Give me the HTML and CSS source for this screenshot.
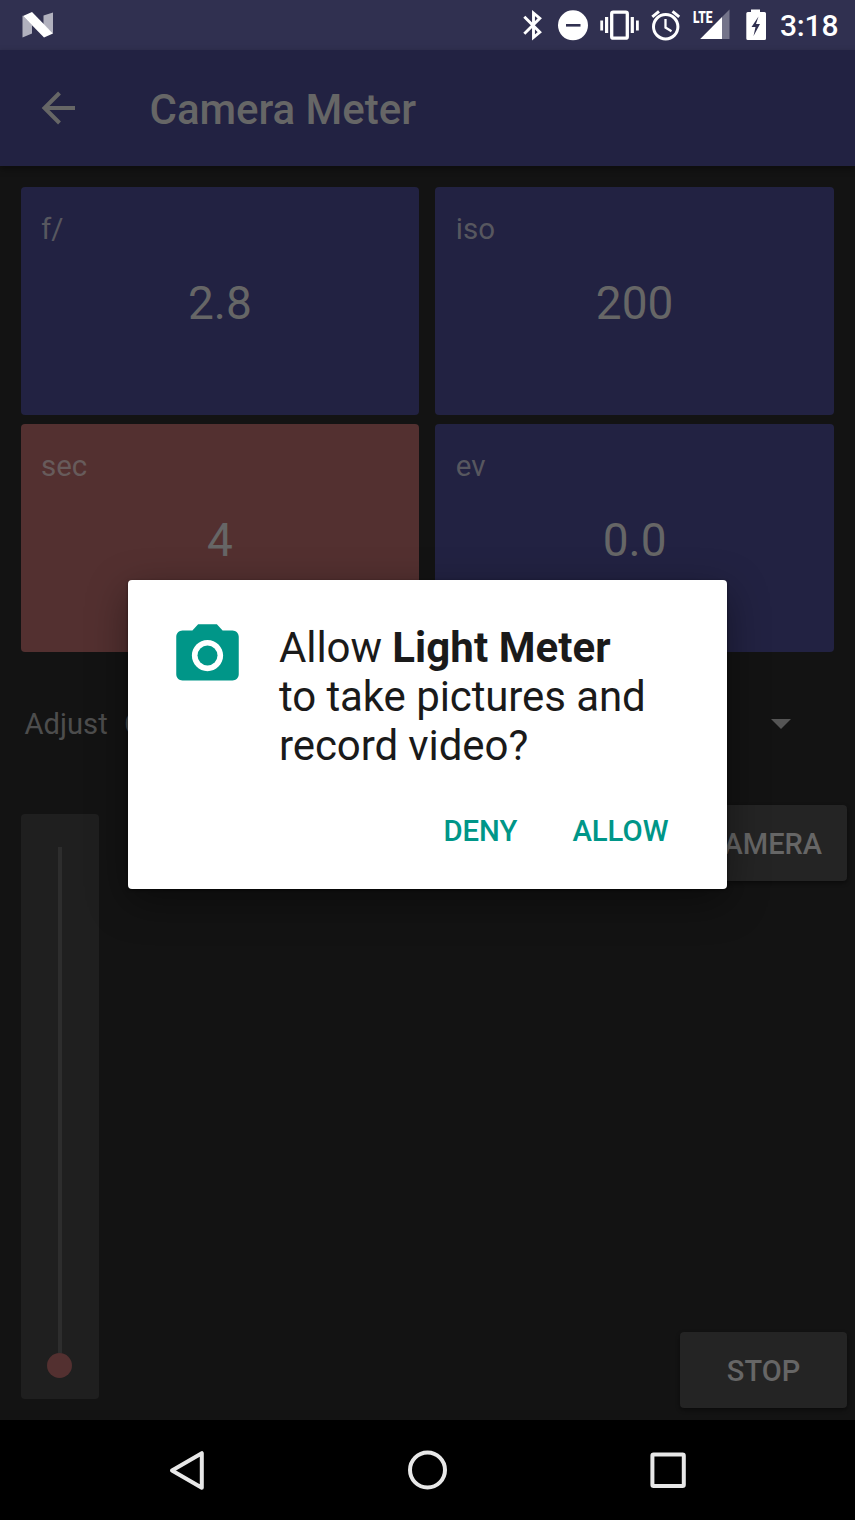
FILE: index.html
```html
<!DOCTYPE html>
<html lang="en">
<head>
<meta charset="utf-8">
<title>Camera Meter</title>
<link rel="stylesheet" href="styles.css">
</head>
<body>
<div class="screen">
  <header class="status">
    <svg class="n-logo" width="56" height="50" viewBox="0 0 56 50">
      <path fill="#b1b1be" d="M22.500 15.500L32 25v8.500l-9.500 4zM43.500 15.500L53 12.500v21l-9.500-9z"/>
      <path fill="#fff" d="M23 16l9-4 21 21.500-9 4z"/>
    </svg>
    <div class="status-icons">
      <svg width="34" height="50" viewBox="516 0 34 50" fill="none" stroke="#fff" stroke-width="2.900">
        <path d="M524.300 16.700l15.500 15.500-6.300 5.300V13l6.300 5.300-15.500 15.500"/>
      </svg>
      <svg width="45" height="50" viewBox="550 0 45 50">
        <circle cx="573" cy="25.300" r="15" fill="#fff"/><path fill="#303050" d="M566 24h14.500v2.600H566z"/>
      </svg>
      <svg width="48" height="50" viewBox="595 0 48 50">
        <path fill="#fff" d="M600.300 20.500h2.800v10h-2.800zM605 17h3.200v16H605zM630.700 17h3.200v16h-3.200zM636 20.500h2.800v10H636z"/>
        <rect x="611.700" y="12.200" width="15.600" height="26" rx="1.500" fill="none" stroke="#fff" stroke-width="3.300"/>
      </svg>
      <svg width="45" height="50" viewBox="643 0 45 50" fill="none" stroke="#fff" stroke-width="3">
        <circle cx="665.700" cy="26.700" r="12.200"/><path d="M665.500 19v8.500l6 3.700" stroke-width="2.300"/><path d="M652.300 16.800l6.700-5.500M672.500 11.300l6.700 5.500"/>
      </svg>
      <svg width="50" height="50" viewBox="688 0 50 50">
        <path fill="#74748a" d="M729.500 9.500V39H722V17z"/><path fill="#fff" d="M722 17v22h-21.800z"/>
        <text class="lte" x="693" y="23" textLength="19.500" lengthAdjust="spacingAndGlyphs">LTE</text>
      </svg>
      <svg width="34" height="50" viewBox="738 0 34 50">
        <path fill="#fff" d="M751 9.500h9v2.500h4.500q1.500 0 1.500 1.500v25q0 1.500-1.500 1.500h-16.700q-1.500 0-1.500-1.500v-25q0-1.500 1.500-1.500h3.200z"/>
        <path fill="#303050" d="M758.500 16.500L751.500 27h4l-2 9 6.500-12h-4z"/>
      </svg>
      <span class="clock">3:18</span>
    </div>
  </header>

  <div class="appbar">
    <svg class="back" width="36" height="36" viewBox="0 0 36 36" fill="none" stroke="#666" stroke-width="4">
      <path d="M19.500 3L4.500 18l15 15M4.500 18H35"/>
    </svg>
    <h1 class="title">Camera Meter</h1>
  </div>

  <main class="content">
    <section class="cards">
      <div class="card"><div class="label">f/</div><div class="value">2.8</div></div>
      <div class="card"><div class="label">iso</div><div class="value">200</div></div>
      <div class="card active"><div class="label">sec</div><div class="value">4</div></div>
      <div class="card"><div class="label">ev</div><div class="value">0.0</div></div>
    </section>
    <div class="adjust">
      <span>Adjust</span><span class="choice">C</span>
      <svg class="caret" width="20" height="10" viewBox="0 0 20 10"><path fill="#555" d="M0 0h20L10 10z"/></svg>
    </div>
    <div class="controls">
      <div class="slider"><div class="track"></div><div class="thumb"></div></div>
      <div class="buttons">
        <button class="btn camera">CAMERA</button>
        <button class="btn stop">STOP</button>
      </div>
    </div>
  </main>

  <nav class="nav">
    <svg width="855" height="100" viewBox="0 1420 855 100" fill="none" stroke="#e8e8e8" stroke-width="4" stroke-linejoin="round">
      <path d="M172 1470.500l29.800-17.300v34.600z"/>
      <circle cx="427.500" cy="1470" r="17.500"/>
      <rect x="652.400" y="1454.500" width="31.400" height="31.400" rx="1.200"/>
    </svg>
  </nav>

  <div class="dialog">
    <div class="message">
      <svg class="cam-icon" width="75" height="75" viewBox="0 0 24 24">
        <circle cx="12" cy="12" r="3.200" fill="#009688"/>
        <path fill="#009688" d="M9 2L7.170 4H4c-1.100 0-2 .9-2 2v12c0 1.100.9 2 2 2h16c1.100 0 2-.9 2-2V6c0-1.100-.9-2-2-2h-3.170L15 2H9zm3 15c-2.760 0-5-2.240-5-5s2.240-5 5-5 5 2.240 5 5-2.240 5-5 5z"/>
      </svg>
      <p class="question">Allow <b>Light Meter</b><br>to take pictures and<br>record video?</p>
    </div>
    <div class="actions"><span>DENY</span><span>ALLOW</span></div>
  </div>
</div>
</body>
</html>
```
FILE: styles.css
```css
* { box-sizing: border-box; }
body { margin: 0; background: #131313; font-family: Roboto, "Liberation Sans", sans-serif; }
svg { display: block; flex: none; }
.screen { position: relative; width: 855px; height: 1520px; display: flex; flex-direction: column; overflow: hidden; }
.status { height: 50px; flex: none; background: #303050; display: flex; justify-content: space-between; }
.status-icons { display: flex; padding-right: 17px; }
.lte { font: 900 17px Roboto, sans-serif; fill: #fff; }
.clock { width: 66px; padding-left: 8px; font-size: 30px; font-weight: 500; line-height: 52px; letter-spacing: -.2px; color: #fff; white-space: nowrap; }
.appbar { height: 116px; flex: none; background: #222242; display: flex; align-items: center; padding-left: 40px; box-shadow: 0 3px 7px rgba(0, 0, 0, .35); }
.title { margin: 4px 0 0 73.500px; font-size: 42px; font-weight: 500; letter-spacing: -.03px; color: #666; line-height: 50px; }
.content { flex: 1; display: flex; flex-direction: column; }
.cards { display: grid; grid-template-columns: 1fr 1fr; gap: 9px 16px; padding: 21px 21px 0 20.500px; }
.card { height: 228px; background: #222242; border-radius: 4px; padding: 25px 20.500px 0; display: flex; flex-direction: column; gap: 29px; }
.card.active { background: #533030; }
.label { font-size: 29.500px; line-height: 34px; color: #57575f; }
.active .label { color: #675b5b; }
.value { font-size: 46px; line-height: 56px; color: #666; text-align: center; }
.adjust { height: 60px; margin-top: 42px; padding: 0 64px 0 24.500px; display: flex; align-items: center; font-size: 29.200px; color: #4d4d4d; }
.choice { margin-left: 16.500px; }
.caret { margin-left: auto; }
.controls { display: flex; justify-content: space-between; margin-top: 51px; padding: 0 8px 0 21px; }
.slider { width: 78px; height: 585px; margin-top: 9px; padding-top: 33px; background: #1f1f1f; border-radius: 4px; display: flex; flex-direction: column; align-items: center; }
.track { width: 4px; height: 506px; background: #2d2d2d; }
.thumb { width: 25px; height: 25px; margin-right: 1px; border-radius: 50%; background: #533030; }
.buttons { display: flex; flex-direction: column; justify-content: space-between; align-items: flex-end; height: 603px; }
.btn { height: 76px; border: 0; border-radius: 4px; background: #242424; color: #666; font: 500 29px/74px Roboto, "Liberation Sans", sans-serif; padding: 2px 25px 0; box-shadow: 0 2px 4px rgba(0, 0, 0, .45); }
.stop { width: 167px; }
.nav { height: 100px; flex: none; background: #000; }
.dialog { position: absolute; left: 128px; top: 580px; width: 599px; height: 309px; background: #fff; border-radius: 4px; padding: 38px 58.500px 0 42px; box-shadow: 0 12px 40px rgba(0, 0, 0, .4), 0 1px 3px rgba(0, 0, 0, .5); }
.message { display: flex; }
.question { margin: 5px 0 0 34px; font-size: 42px; letter-spacing: -.09px; line-height: 49px; color: #1a1a1a; white-space: nowrap; }
.question b { font-weight: 700; letter-spacing: .08px; }
.actions { display: flex; justify-content: flex-end; gap: 55px; margin-top: 44px; font-size: 29.300px; font-weight: 500; line-height: 34px; color: #009688; }
```
